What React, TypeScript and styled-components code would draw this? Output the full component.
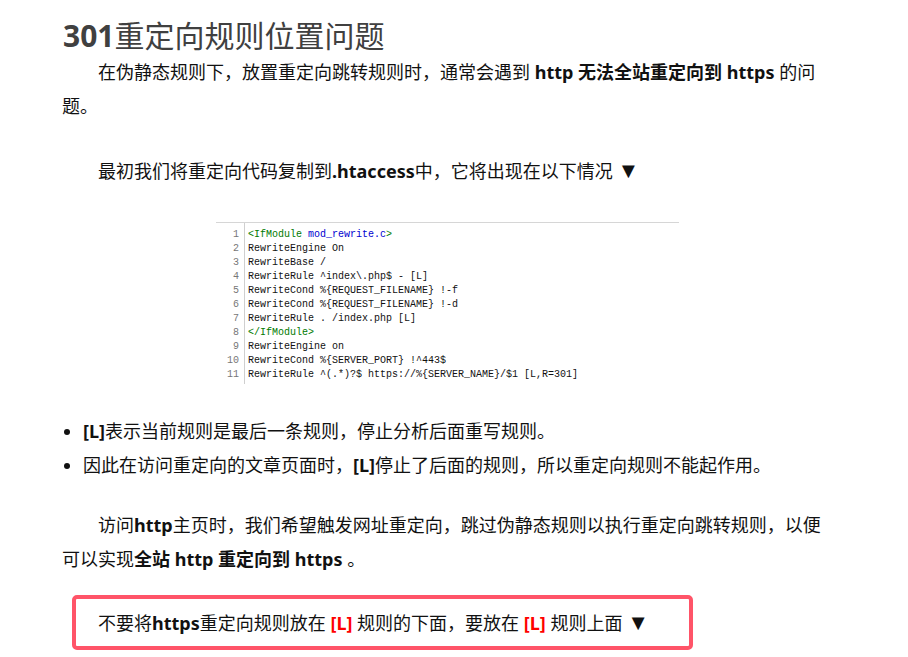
import styled, { createGlobalStyle } from 'styled-components';

const GlobalStyle = createGlobalStyle`
  html, body {
    margin: 0;
    padding: 0;
    background: #fff;
    overflow: hidden;
  }
`;

const Article = styled.article`
  width: 765px;
  height: 657px;
  padding: 0 0 0 62px;
  font-family: 'Noto Sans', 'Noto Sans CJK SC', sans-serif;
  font-size: 18px;
  line-height: 34px;
  color: #111;
`;

const Title = styled.h2`
  margin: 0;
  padding: 16px 0 0 1px;
  height: 55px;
  box-sizing: border-box;
  font-size: 30px;
  line-height: 40px;
  font-weight: 400;
  color: #404040;

  b {
    font-weight: 700;
  }
`;

const Para = styled.p<{ $gap: number }>`
  margin: ${(p) => p.$gap}px 0 0;
  text-indent: 36px;
  font-size: 18px;
`;

const Strong = styled.b`
  font-weight: 700;
`;

const Red = styled.b`
  font-weight: 700;
  color: #f00;
`;

const Arrow = styled.span`
  font-family: 'Liberation Sans', 'DejaVu Sans', sans-serif;
  font-size: 22px;
  line-height: 0;
`;

const CodeShot = styled.div`
  width: 463px;
  height: 162px;
  margin: 34px 0 0 154px;
  box-sizing: border-box;
  border-top: 1px solid #d6d6d6;
  padding-top: 5px;
  background: #fff;
  display: grid;
  grid-template-columns: 29px 1fr;
  font-family: 'Liberation Mono', monospace;
  font-size: 10px;
  line-height: 14px;
  color: #111;
`;

const Gutter = styled.div`
  text-align: right;
  padding-right: 5px;
  margin-top: -5px;
  padding-top: 5px;
  border-right: 1px solid #cfcfcf;
  color: #777;
`;

const Lines = styled.div`
  padding-left: 3px;
  white-space: pre;
`;

const Tag = styled.span`
  color: #007a00;
`;

const Attr = styled.span`
  color: #0000d0;
`;

const List = styled.ul`
  margin: 31px 0 0;
  padding: 0 0 0 21px;
  font-size: 18px;
`;

const Item = styled.li`
  line-height: 33.5px;
`;

const Callout = styled.div`
  width: 621px;
  height: 55px;
  margin: 19px 0 0 10px;
  box-sizing: border-box;
  border: 4px solid #ff5468;
  border-radius: 5px;
  padding: 7px 0 0 22px;
  font-size: 18px;
  line-height: 34px;
`;

const numbers = Array.from({ length: 11 }, (_, i) => i + 1);

export default function App() {
  return (
    <>
      <GlobalStyle />
      <Article>
        <Title>
          <b>301</b>重定向规则位置问题
        </Title>
        <Para $gap={0}>
          在伪静态规则下，放置重定向跳转规则时，通常会遇到 <Strong>http 无法全站重定向到 https</Strong> 的问题。
        </Para>
        <Para $gap={31}>
          最初我们将重定向代码复制到<Strong>.htaccess</Strong>中，它将出现在以下情况 <Arrow>▼</Arrow>
        </Para>
        <CodeShot>
          <Gutter>
            {numbers.map((n) => (
              <div key={n}>{n}</div>
            ))}
          </Gutter>
          <Lines>
            <div>
              <Tag>&lt;IfModule </Tag>
              <Attr>mod_rewrite.c</Attr>
              <Tag>&gt;</Tag>
            </div>
            <div>RewriteEngine On</div>
            <div>RewriteBase /</div>
            <div>RewriteRule ^index\.php$ - [L]</div>
            <div>RewriteCond %{'{'}REQUEST_FILENAME{'}'} !-f</div>
            <div>RewriteCond %{'{'}REQUEST_FILENAME{'}'} !-d</div>
            <div>RewriteRule . /index.php [L]</div>
            <div>
              <Tag>&lt;/IfModule&gt;</Tag>
            </div>
            <div>RewriteEngine on</div>
            <div>RewriteCond %{'{'}SERVER_PORT{'}'} !^443$</div>
            <div>RewriteRule ^(.*)?$ https://%{'{'}SERVER_NAME{'}'}/$1 [L,R=301]</div>
          </Lines>
        </CodeShot>
        <List>
          <Item>
            <Strong>[L]</Strong>表示当前规则是最后一条规则，停止分析后面重写规则。
          </Item>
          <Item>
            因此在访问重定向的文章页面时，<Strong>[L]</Strong>停止了后面的规则，所以重定向规则不能起作用。
          </Item>
        </List>
        <Para $gap={26}>
          访问<Strong>http</Strong>主页时，我们希望触发网址重定向，跳过伪静态规则以执行重定向跳转规则，以便可以实现<Strong>全站 http 重定向到 https</Strong> 。
        </Para>
        <Callout>
          不要将<Strong>https</Strong>重定向规则放在 <Red>[L]</Red> 规则的下面，要放在 <Red>[L]</Red> 规则上面 <Arrow>▼</Arrow>
        </Callout>
      </Article>
    </>
  );
}
